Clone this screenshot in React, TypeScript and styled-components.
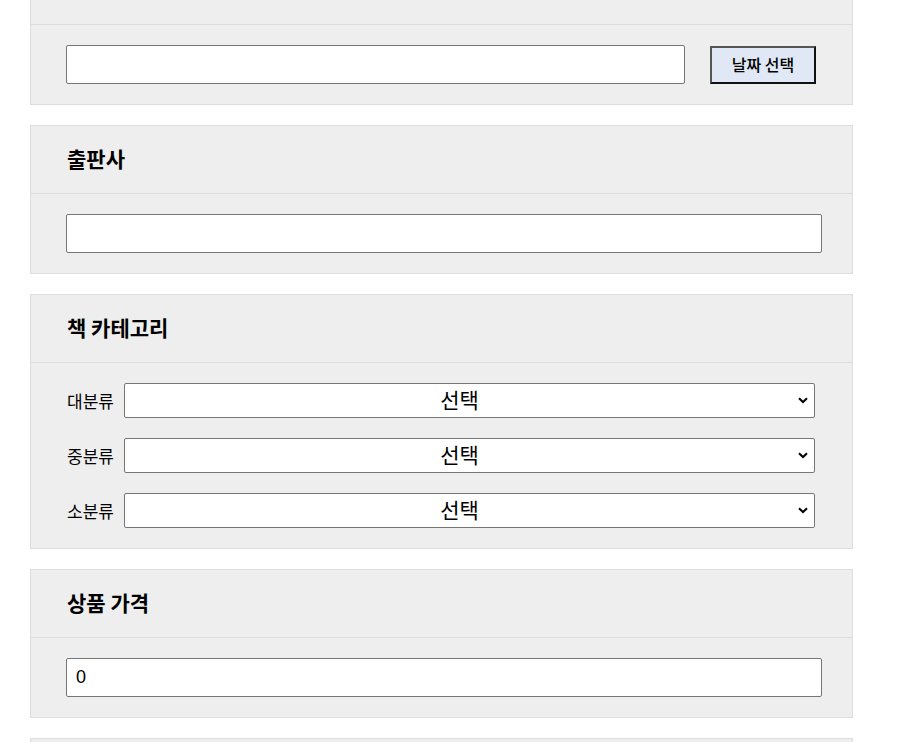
import { FC } from "react";
import styled, { createGlobalStyle } from "styled-components";

const GlobalStyle = createGlobalStyle`
  body {
    margin: 0;
    background: #fff;
    font-family: "Noto Sans CJK KR", "Noto Sans", sans-serif;
    color: #000;
  }
`;

const StyledPage = styled.div`
  margin-top: -44px;
  padding-left: 30px;
  padding-bottom: 40px;
`;

const StyledCard = styled.section`
  box-sizing: border-box;
  width: 823px;
  background-color: #eeeeee;
  border: 1px solid #dddddd;
  margin-bottom: 20px;
`;

const StyledCardHeader = styled.div`
  box-sizing: border-box;
  display: flex;
  align-items: center;
  height: 68px;
  padding: 0 36px 4px;
  border-bottom: 1px solid #dddddd;
`;

const StyledTitle = styled.h3`
  margin: 0;
  font-size: 21px;
  font-weight: 700;
  line-height: 26px;
`;

const StyledCardBody = styled.div`
  display: flex;
  align-items: center;
  padding: 20px 30px 20px 35px;
`;

const StyledCategoryBody = styled.div`
  display: grid;
  grid-template-columns: 57px 1fr;
  row-gap: 20px;
  align-items: center;
  padding: 20px 37px 20px 36px;
`;

const StyledInput = styled.input<{ $width?: number }>`
  box-sizing: border-box;
  width: ${(props) => (props.$width ? `${props.$width}px` : "100%")};
  height: 39px;
  margin: 0;
  padding: 0 9px;
  border: 1px solid #767676;
  border-radius: 2px;
  background: #fff;
  font-family: "Liberation Sans", Arial, sans-serif;
  font-size: 18px;
  color: #000;
  outline: none;
`;

const StyledDateButton = styled.button`
  box-sizing: border-box;
  width: 106px;
  height: 38px;
  margin-left: 25px;
  padding: 0 0 2px;
  background-color: #dfe8f4;
  border: 2px solid;
  border-color: #555 #111 #111 #555;
  font-family: "Noto Sans CJK KR", sans-serif;
  font-size: 16px;
  font-weight: 500;
  color: #000;
`;

const StyledLabel = styled.label`
  font-size: 17px;
  line-height: 22px;
`;

const StyledSelectWrap = styled.div`
  position: relative;
  height: 35px;
`;

const StyledSelect = styled.select`
  box-sizing: border-box;
  width: 100%;
  height: 35px;
  margin: 0;
  padding: 0 24px 4px 4px;
  appearance: none;
  border: 1px solid #767676;
  border-radius: 2px;
  background-color: #fff;
  font-family: "Noto Sans CJK KR", sans-serif;
  font-size: 21px;
  text-align: center;
  text-align-last: center;
  color: #000;
`;

const StyledChevron = styled.svg`
  position: absolute;
  right: 7px;
  top: 14px;
  width: 10px;
  height: 7px;
  pointer-events: none;
`;

const categories = ["대분류", "중분류", "소분류"];

const Card: FC<{ title?: string; children?: React.ReactNode }> = ({
  title,
  children,
}) => (
  <StyledCard>
    <StyledCardHeader>{title && <StyledTitle>{title}</StyledTitle>}</StyledCardHeader>
    {children}
  </StyledCard>
);

const App: FC = () => {
  return (
    <>
      <GlobalStyle />
      <StyledPage>
        <Card>
          <StyledCardBody>
            <StyledInput $width={619} readOnly />
            <StyledDateButton>날짜 선택</StyledDateButton>
          </StyledCardBody>
        </Card>
        <Card title="출판사">
          <StyledCardBody>
            <StyledInput />
          </StyledCardBody>
        </Card>
        <Card title="책 카테고리">
          <StyledCategoryBody>
            {categories.map((name) => (
              <>
                <StyledLabel key={`l-${name}`}>{name}</StyledLabel>
                <StyledSelectWrap key={`s-${name}`}>
                  <StyledSelect defaultValue="">
                    <option value="">선택</option>
                  </StyledSelect>
                  <StyledChevron viewBox="0 0 10 7">
                    <path
                      d="M1 1.2 L5 5 L9 1.2"
                      fill="none"
                      stroke="#000"
                      strokeWidth="2"
                    />
                  </StyledChevron>
                </StyledSelectWrap>
              </>
            ))}
          </StyledCategoryBody>
        </Card>
        <Card title="상품 가격">
          <StyledCardBody>
            <StyledInput defaultValue="0" />
          </StyledCardBody>
        </Card>
        <Card>
          <StyledCardBody>
            <StyledInput defaultValue="0" />
          </StyledCardBody>
        </Card>
      </StyledPage>
    </>
  );
};

export default App;
